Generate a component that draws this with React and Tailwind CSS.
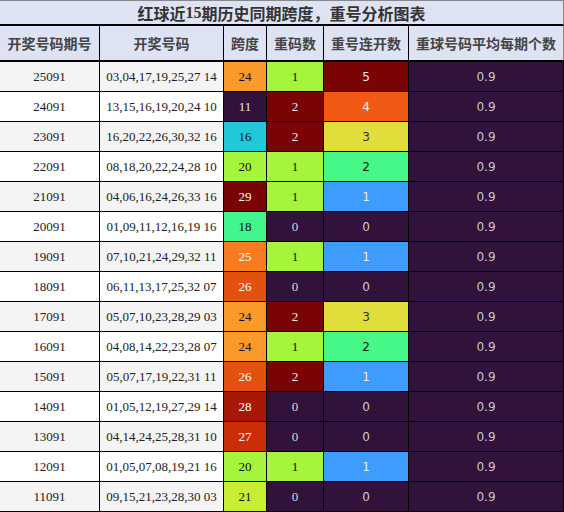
const rows = [
  ['25091', '03,04,17,19,25,27 14', 24, 1, 5],
  ['24091', '13,15,16,19,20,24 10', 11, 2, 4],
  ['23091', '16,20,22,26,30,32 16', 16, 2, 3],
  ['22091', '08,18,20,22,24,28 10', 20, 1, 2],
  ['21091', '04,06,16,24,26,33 16', 29, 1, 1],
  ['20091', '01,09,11,12,16,19 16', 18, 0, 0],
  ['19091', '07,10,21,24,29,32 11', 25, 1, 1],
  ['18091', '06,11,13,17,25,32 07', 26, 0, 0],
  ['17091', '05,07,10,23,28,29 03', 24, 2, 3],
  ['16091', '04,08,14,22,23,28 07', 24, 1, 2],
  ['15091', '05,07,17,19,22,31 11', 26, 2, 1],
  ['14091', '01,05,12,19,27,29 14', 28, 0, 0],
  ['13091', '04,14,24,25,28,31 10', 27, 0, 0],
  ['12091', '01,05,07,08,19,21 16', 20, 1, 1],
  ['11091', '09,15,21,23,28,30 03', 21, 0, 0],
]

const spanColor = {
  11: 'bg-[#30123b] text-[#e8e8e8]',
  16: 'bg-[#1fc9d9] text-[#111]',
  18: 'bg-[#42f58c] text-[#111]',
  20: 'bg-[#a4f53b] text-[#111]',
  21: 'bg-[#c6ef33] text-[#111]',
  24: 'bg-[#fb9a2b] text-[#111]',
  25: 'bg-[#f97b1f] text-white',
  26: 'bg-[#e3510f] text-white',
  27: 'bg-[#cb2e07] text-white',
  28: 'bg-[#a81905] text-white',
  29: 'bg-[#7a0403] text-white',
}

const repeatColor = {
  0: 'bg-[#30123b] text-[#d8d8d8]',
  1: 'bg-[#a4f53b] text-[#111]',
  2: 'bg-[#7a0403] text-[#eee]',
}

const streakColor = {
  0: 'bg-[#30123b] text-[#cfcfcf]',
  1: 'bg-[#3d9cfd] text-[#e8e8e8]',
  2: 'bg-[#45f887] text-[#1a1a1a]',
  3: 'bg-[#e1dd3a] text-[#333]',
  4: 'bg-[#f05a14] text-[#f2f2f2]',
  5: 'bg-[#7a0403] text-[#e8e8e8]',
}

const cols = 'grid grid-cols-[100px_124px_43px_57px_85px_1fr]'
const cell = 'flex items-center justify-center border-r border-black'
const serif = "font-['Liberation_Serif',serif] text-[13px]"
const sans = "font-['DejaVu_Sans',sans-serif] text-[12px]"

export default function App() {
  return (
    <div className="w-[564px] h-[512px] overflow-hidden bg-white font-['Noto_Sans_CJK_SC',sans-serif]">
      <div className="h-[26px] bg-[#dde3f3] border-t border-r border-[#888] border-b-2 border-b-black flex items-center justify-center text-[16px] font-bold text-[#333]">
        红球近<span className="font-['Liberation_Serif',serif]">15</span>期历史同期跨度，重号分析图表
      </div>
      <div className={`${cols} h-[36px] bg-[#dde3f3] border-b-2 border-black text-[14px] font-bold text-[#444]`}>
        <div className={cell}>开奖号码期号</div>
        <div className={cell}>开奖号码</div>
        <div className={cell}>跨度</div>
        <div className={cell}>重码数</div>
        <div className={cell}>重号连开数</div>
        <div className="flex items-center justify-center border-r border-[#888]">重球号码平均每期个数</div>
      </div>
      {rows.map(([issue, nums, span, rep, streak], i) => (
        <div
          key={issue}
          className={`${cols} h-[30px] border-b border-black ${i % 2 === 0 ? 'bg-[#f4f4f4]' : 'bg-white'}`}
        >
          <div className={`${cell} ${serif} text-[#222]`}>{issue}</div>
          <div className={`${cell} ${serif} text-[#222]`}>{nums}</div>
          <div className={`${cell} ${serif} ${spanColor[span]}`}>{span}</div>
          <div className={`${cell} ${serif} ${repeatColor[rep]}`}>{rep}</div>
          <div className={`${cell} ${sans} ${streakColor[streak]}`}>{streak}</div>
          <div className={`${cell} ${sans} bg-[#30123b] text-[#c8c8c8]`}>0.9</div>
        </div>
      ))}
    </div>
  )
}
